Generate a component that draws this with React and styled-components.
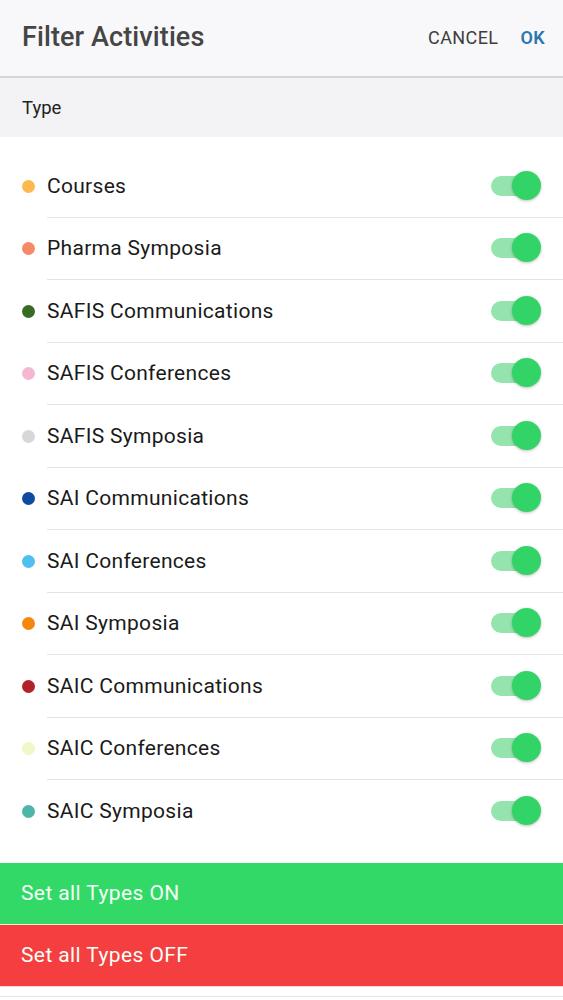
import React from "react";
import styled, { createGlobalStyle } from "styled-components";

const Global = createGlobalStyle`
  html, body { margin: 0; padding: 0; background: #ffffff; }
  body { font-family: Roboto, "Noto Sans", "Liberation Sans", sans-serif; }
  * { box-sizing: border-box; }
`;

const Page = styled.div`
  width: 563px;
  min-height: 1000px;
  background: #ffffff;
  display: flex;
  flex-direction: column;
`;

const Header = styled.header`
  height: 78px;
  background: #f8f7f9;
  display: flex;
  align-items: center;
  padding: 0 18px 2px 22px;
  border-bottom: 2px solid #d6d5d8;
  position: relative;
  z-index: 1;
`;

const Title = styled.h1`
  margin: 0;
  flex: 1;
  font-size: 27px;
  font-weight: 500;
  color: #454545;
  letter-spacing: 0.1px;
`;

const Action = styled.button`
  border: 0;
  background: transparent;
  padding: 0;
  margin-left: ${(p) => p.$gap || 0}px;
  font-family: inherit;
  font-size: 18px;
  font-weight: ${(p) => (p.$primary ? 600 : 400)};
  color: ${(p) => (p.$primary ? "#2b78ad" : "#3e3e3e")};
  letter-spacing: 0.4px;
`;

const SectionHead = styled.div`
  height: 59px;
  background: #f3f2f5;
  display: flex;
  align-items: center;
  padding-left: 22px;
  font-size: 18.5px;
  color: #222222;
`;

const List = styled.ul`
  list-style: none;
  margin: 0;
  padding: 18px 0 0 0;
`;

const Row = styled.li`
  height: 62.5px;
  display: flex;
  align-items: center;
  padding-left: 22px;
`;

const Dot = styled.span`
  width: 13px;
  height: 13px;
  border-radius: 50%;
  background: ${(p) => p.$color};
  flex-shrink: 0;
  margin-right: 12px;
`;

const RowBody = styled.div`
  flex: 1;
  align-self: stretch;
  display: flex;
  align-items: center;
  padding-right: 22px;
  border-bottom: ${(p) => (p.$last ? "0" : "1.5px solid #e3e3e3")};
`;

const Label = styled.span`
  flex: 1;
  font-size: 21px;
  color: #1a1a1a;
  letter-spacing: 0.3px;
`;

const Switch = styled.span`
  position: relative;
  width: 50px;
  height: 30px;
  display: inline-block;
`;

const Track = styled.span`
  position: absolute;
  left: 0;
  top: 5px;
  width: 40px;
  height: 20px;
  border-radius: 10px;
  background: #95e4ae;
`;

const Thumb = styled.span`
  position: absolute;
  right: 0;
  top: 0;
  width: 29px;
  height: 29px;
  border-radius: 50%;
  background: #33d467;
  box-shadow: 0 1px 3px rgba(0, 0, 0, 0.25);
`;

const Buttons = styled.div`
  margin-top: 20px;
  display: flex;
  flex-direction: column;
  border-bottom: 1px solid #e6e6e6;
  padding-bottom: 9px;
`;

const BigButton = styled.button`
  height: 62px;
  border: 0;
  margin: 0;
  text-align: left;
  padding-left: 21px;
  font-family: inherit;
  font-size: 21px;
  letter-spacing: 0.4px;
  color: #f4fff7;
  background: ${(p) => p.$bg};
  border-bottom: 1px solid ${(p) => p.$line};
`;

const items = [
  ["Courses", "#fdb94e"],
  ["Pharma Symposia", "#f58a68"],
  ["SAFIS Communications", "#3a6b25"],
  ["SAFIS Conferences", "#f5b8d0"],
  ["SAFIS Symposia", "#d5d7d9"],
  ["SAI Communications", "#0e4ba0"],
  ["SAI Conferences", "#4fbff0"],
  ["SAI Symposia", "#f5870f"],
  ["SAIC Communications", "#b02428"],
  ["SAIC Conferences", "#eef8c8"],
  ["SAIC Symposia", "#4eb6a8"],
];

export default function App() {
  return (
    <Page>
      <Global />
      <Header>
        <Title>Filter Activities</Title>
        <Action>CANCEL</Action>
        <Action $primary $gap={22}>OK</Action>
      </Header>
      <SectionHead>Type</SectionHead>
      <List>
        {items.map(([name, color], i) => (
          <Row key={name}>
            <Dot $color={color} />
            <RowBody $last={i === items.length - 1}>
              <Label>{name}</Label>
              <Switch>
                <Track />
                <Thumb />
              </Switch>
            </RowBody>
          </Row>
        ))}
      </List>
      <Buttons>
        <BigButton $bg="#33d966" $line="#f0e8d8">Set all Types ON</BigButton>
        <BigButton $bg="#f43e40" $line="#f8dada">Set all Types OFF</BigButton>
      </Buttons>
    </Page>
  );
}
